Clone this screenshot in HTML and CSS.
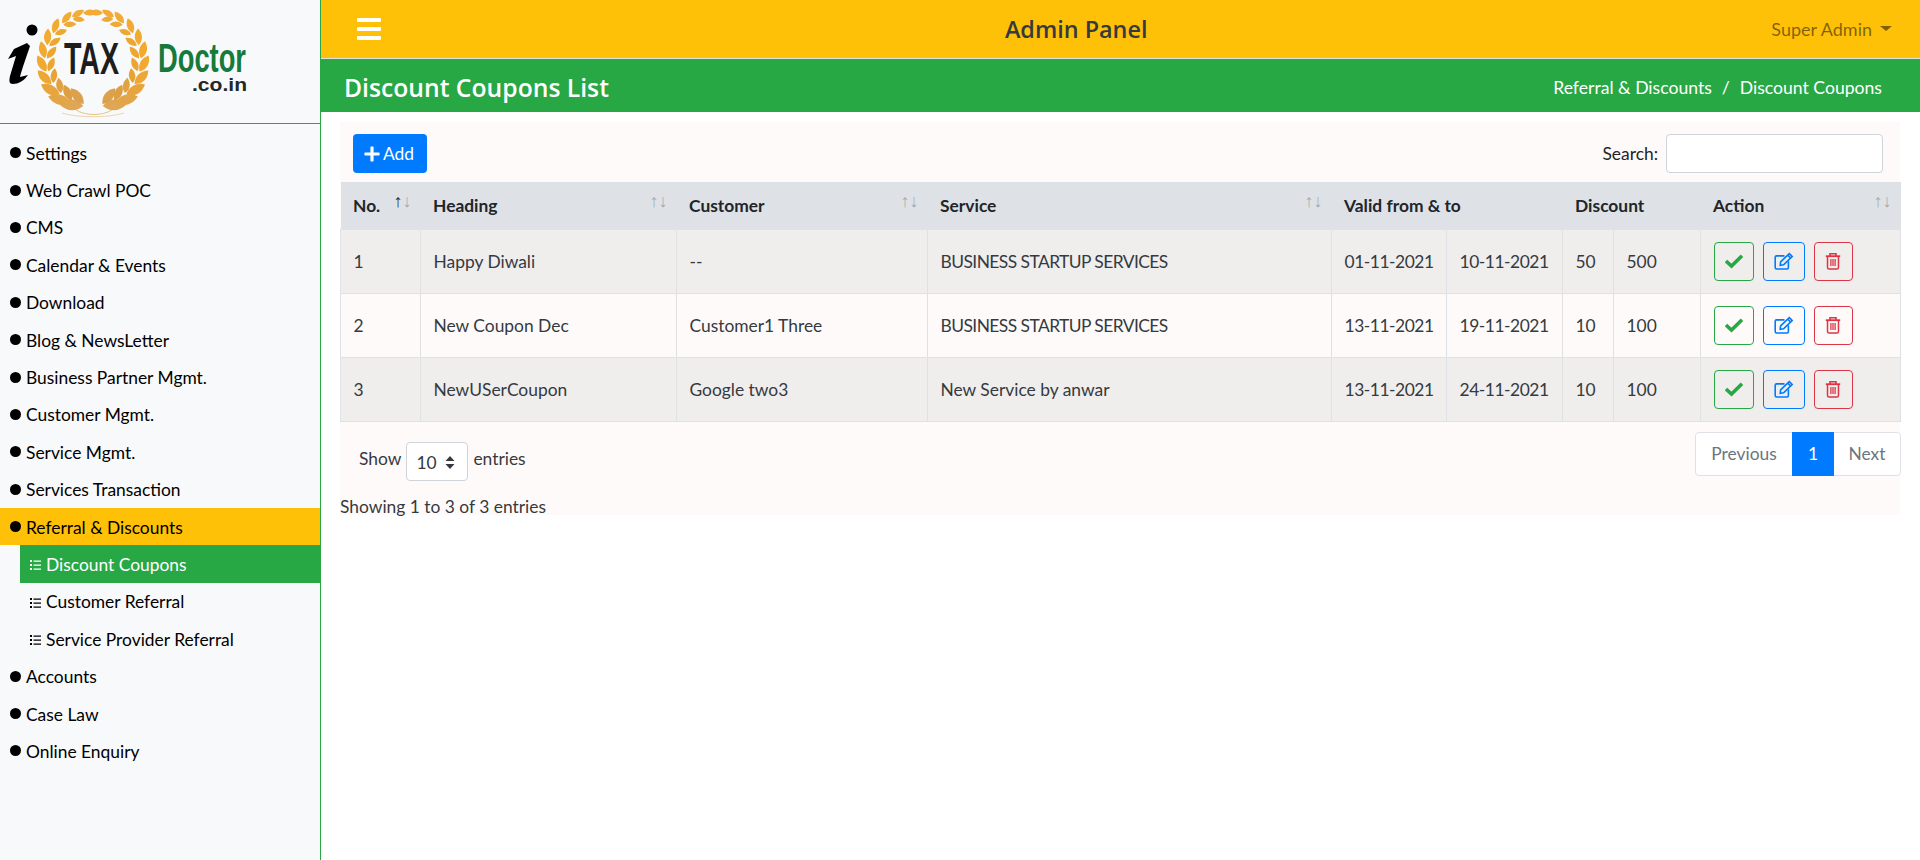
FILE: index.html
```html
<!DOCTYPE html>
<html lang="en">
<head>
<meta charset="utf-8">
<title>Discount Coupons List</title>
<link rel="stylesheet" href="styles.css">
</head>
<body>
<svg class="sprites" width="0" height="0" aria-hidden="true">
  <defs>
    <path id="leaf" d="M0 0C-4 -6 -11 -8 -18 -4C-13 3 -6 4 0 0Z"/>
    <g id="wreath-half">
      <use href="#leaf" fill="#dfa656" transform="translate(93 60) rotate(12) translate(0 47) rotate(-18) scale(1.35)"/>
      <use href="#leaf" fill="#dca14c" transform="translate(93 60) rotate(12) translate(0 45) rotate(26) scale(1.1)"/>
      <use href="#leaf" fill="#e2a548" transform="translate(93 60) rotate(28) translate(0 48) rotate(-26) scale(1.25)"/>
      <use href="#leaf" fill="#dd9f42" transform="translate(93 60) rotate(28) translate(0 46) rotate(24) scale(.95)"/>
      <use href="#leaf" fill="#e8a53c" transform="translate(93 60) rotate(44) translate(0 48) rotate(-28) scale(1.15)"/>
      <use href="#leaf" fill="#e2a23f" transform="translate(93 60) rotate(44) translate(0 46) rotate(24) scale(.85)"/>
      <use href="#leaf" fill="#eda735" transform="translate(93 60) rotate(60) translate(0 48) rotate(-28) scale(1.05)"/>
      <use href="#leaf" fill="#e7a435" transform="translate(93 60) rotate(60) translate(0 46) rotate(24) scale(.8)"/>
      <use href="#leaf" fill="#f1a92f" transform="translate(93 60) rotate(76) translate(0 48) rotate(-28)"/>
      <use href="#leaf" fill="#eba632" transform="translate(93 60) rotate(76) translate(0 46) rotate(24) scale(.8)"/>
      <use href="#leaf" fill="#f2a92e" transform="translate(93 60) rotate(92) translate(0 48) rotate(-28) scale(.95)"/>
      <use href="#leaf" fill="#eda731" transform="translate(93 60) rotate(92) translate(0 46) rotate(24) scale(.8)"/>
      <use href="#leaf" fill="#f2aa2f" transform="translate(93 60) rotate(108) translate(0 48) rotate(-28) scale(.9)"/>
      <use href="#leaf" fill="#eda731" transform="translate(93 60) rotate(108) translate(0 46) rotate(24) scale(.75)"/>
      <use href="#leaf" fill="#f2aa30" transform="translate(93 60) rotate(124) translate(0 48) rotate(-28) scale(.85)"/>
      <use href="#leaf" fill="#eda832" transform="translate(93 60) rotate(124) translate(0 46) rotate(24) scale(.7)"/>
      <use href="#leaf" fill="#f2ab33" transform="translate(93 60) rotate(140) translate(0 48) rotate(-24) scale(.8)"/>
      <use href="#leaf" fill="#eeaa36" transform="translate(93 60) rotate(140) translate(0 46) rotate(24) scale(.7)"/>
      <use href="#leaf" fill="#f2ab36" transform="translate(93 60) rotate(154) translate(0 48) rotate(-16) scale(.75)"/>
      <use href="#leaf" fill="#eeaa36" transform="translate(93 60) rotate(154) translate(0 46) rotate(20) scale(.65)"/>
      <use href="#leaf" fill="#f2ab36" transform="translate(93 60) rotate(168) translate(0 48) rotate(-4) scale(.75)"/>
    </g>
    <g id="ico-check"><path d="M1 9L6.5 14L17 3.8" fill="none" stroke="#28a745" stroke-width="3.5"/></g>
    <g id="ico-edit" fill="none" stroke="#007bff" stroke-width="1.6">
      <path d="M10.5 3.9H2.6A1.4 1.4 0 0 0 1.2 5.3V15.6A1.4 1.4 0 0 0 2.6 17H13A1.4 1.4 0 0 0 14.4 15.6V9.3"/>
      <path d="M6.6 9.8L15.3 1.6L18.2 4.4L9.6 12.8L6.2 13.3Z"/>
      <path d="M13.7 3.2L16.6 6"/>
    </g>
    <g id="ico-trash" fill="none" stroke="#dc3545" stroke-width="1.5">
      <path d="M.8 4.2H15.2" stroke-width="1.8"/>
      <path d="M5 4V1.8H11V4" stroke-width="1.6"/>
      <path d="M2.5 4.4V15.4A1.6 1.6 0 0 0 4.1 17H11.9A1.6 1.6 0 0 0 13.5 15.4V4.4"/>
      <path d="M5.9 7V14M8 7V14M10.1 7V14" stroke-width="1.3"/>
    </g>
    <g id="ico-list" fill="currentColor">
      <path d="M0 1h2v2H0zM0 5h2v2H0zM0 9h2v2H0zM3.5 1.4h7.5v1.3H3.5zM3.5 5.4h7.5v1.3H3.5zM3.5 9.4h7.5v1.3H3.5z"/>
    </g>
  </defs>
</svg>

<div class="app">
  <aside class="sidebar">
    <div class="brand">
      <svg class="logo" width="320" height="122" viewBox="0 0 320 122">
        <use href="#wreath-half"/>
        <use href="#wreath-half" transform="translate(186 0) scale(-1 1)"/>
        <path d="M76 110C86 116 102 116 112 110" fill="none" stroke="#e6c38d" stroke-width="1"/>
        <path d="M62 113C78 118 108 118 124 113" fill="none" stroke="#eed5ad" stroke-width="1"/>
        <circle cx="32" cy="30" r="5.5" fill="#000"/>
        <path class="i-mark" d="M14 49L27 43L30 46C26 58 22 69 20 77L28 75C24 81 18 84 13 84C9 84 9 81 10 76L16 56L8 59Z"/>
        <text class="logo-tax" x="64" y="74" textLength="55" lengthAdjust="spacingAndGlyphs">TAX</text>
        <text class="logo-doctor" x="158" y="72" textLength="88" lengthAdjust="spacingAndGlyphs">Doctor</text>
        <text class="logo-domain" x="192" y="91" textLength="55" lengthAdjust="spacingAndGlyphs">.co.in</text>
      </svg>
    </div>
    <nav class="menu">
      <a class="menu-item"><i class="dot"></i><span>Settings</span></a>
      <a class="menu-item"><i class="dot"></i><span>Web Crawl POC</span></a>
      <a class="menu-item"><i class="dot"></i><span>CMS</span></a>
      <a class="menu-item"><i class="dot"></i><span>Calendar &amp; Events</span></a>
      <a class="menu-item"><i class="dot"></i><span>Download</span></a>
      <a class="menu-item"><i class="dot"></i><span>Blog &amp; NewsLetter</span></a>
      <a class="menu-item"><i class="dot"></i><span>Business Partner Mgmt.</span></a>
      <a class="menu-item"><i class="dot"></i><span>Customer Mgmt.</span></a>
      <a class="menu-item"><i class="dot"></i><span>Service Mgmt.</span></a>
      <a class="menu-item"><i class="dot"></i><span>Services Transaction</span></a>
      <a class="menu-item open"><i class="dot"></i><span>Referral &amp; Discounts</span></a>
      <a class="sub-item current"><svg class="sub-ico" width="11" height="11" viewBox="0 0 11 11"><use href="#ico-list"/></svg><span>Discount Coupons</span></a>
      <a class="sub-item"><svg class="sub-ico" width="11" height="11" viewBox="0 0 11 11"><use href="#ico-list"/></svg><span>Customer Referral</span></a>
      <a class="sub-item"><svg class="sub-ico" width="11" height="11" viewBox="0 0 11 11"><use href="#ico-list"/></svg><span>Service Provider Referral</span></a>
      <a class="menu-item"><i class="dot"></i><span>Accounts</span></a>
      <a class="menu-item"><i class="dot"></i><span>Case Law</span></a>
      <a class="menu-item"><i class="dot"></i><span>Online Enquiry</span></a>
    </nav>
  </aside>

  <main class="main">
    <header class="topbar">
      <svg class="bars" width="24" height="22" viewBox="0 0 24 22"><path d="M1 0H23A1 1 0 0 1 24 1V3A1 1 0 0 1 23 4H1A1 1 0 0 1 0 3V1A1 1 0 0 1 1 0ZM1 9H23A1 1 0 0 1 24 10V12A1 1 0 0 1 23 13H1A1 1 0 0 1 0 12V10A1 1 0 0 1 1 9ZM1 18H23A1 1 0 0 1 24 19V21A1 1 0 0 1 23 22H1A1 1 0 0 1 0 21V19A1 1 0 0 1 1 18Z" fill="#fff"/></svg>
      <div class="panel-title">Admin Panel</div>
      <div class="user">Super Admin<i class="caret"></i></div>
    </header>
    <div class="pagehead">
      <h1>Discount Coupons List</h1>
      <div class="crumbs"><span>Referral &amp; Discounts</span><span class="sep">/</span><span>Discount Coupons</span></div>
    </div>

    <section class="card">
      <div class="toolbar">
        <button class="btn-add"><svg width="16" height="16" viewBox="0 0 16 16"><path d="M6.4 1.2A.8.8 0 0 1 7.2.4H8.8A.8.8 0 0 1 9.6 1.2V6.4H14.8A.8.8 0 0 1 15.6 7.2V8.8A.8.8 0 0 1 14.8 9.6H9.6V14.8A.8.8 0 0 1 8.8 15.6H7.2A.8.8 0 0 1 6.4 14.8V9.6H1.2A.8.8 0 0 1 .4 8.8V7.2A.8.8 0 0 1 1.2 6.4H6.4Z" fill="#fff"/></svg>Add</button>
        <label class="search">Search:<span class="search-box"></span></label>
      </div>
      <table class="grid">
        <colgroup>
          <col class="c-no"><col class="c-head"><col class="c-cust"><col class="c-serv"><col class="c-from"><col class="c-to"><col class="c-d1"><col class="c-d2"><col class="c-act">
        </colgroup>
        <thead>
          <tr>
            <th class="sort active">No.</th>
            <th class="sort">Heading</th>
            <th class="sort">Customer</th>
            <th class="sort">Service</th>
            <th colspan="2">Valid from &amp; to</th>
            <th colspan="2">Discount</th>
            <th class="sort">Action</th>
          </tr>
        </thead>
        <tbody>
          <tr class="odd">
            <td>1</td><td>Happy Diwali</td><td>--</td><td class="caps">BUSINESS STARTUP SERVICES</td><td class="date">01-11-2021</td><td class="date">10-11-2021</td><td>50</td><td>500</td>
            <td><div class="actions"><a class="act act-ok"><svg width="18" height="18" viewBox="0 0 18 18"><use href="#ico-check"/></svg></a><a class="act act-edit"><svg width="20" height="18" viewBox="0 0 20 18"><use href="#ico-edit"/></svg></a><a class="act act-del"><svg width="16" height="18" viewBox="0 0 16 18"><use href="#ico-trash"/></svg></a></div></td>
          </tr>
          <tr>
            <td>2</td><td>New Coupon Dec</td><td>Customer1 Three</td><td class="caps">BUSINESS STARTUP SERVICES</td><td class="date">13-11-2021</td><td class="date">19-11-2021</td><td>10</td><td>100</td>
            <td><div class="actions"><a class="act act-ok"><svg width="18" height="18" viewBox="0 0 18 18"><use href="#ico-check"/></svg></a><a class="act act-edit"><svg width="20" height="18" viewBox="0 0 20 18"><use href="#ico-edit"/></svg></a><a class="act act-del"><svg width="16" height="18" viewBox="0 0 16 18"><use href="#ico-trash"/></svg></a></div></td>
          </tr>
          <tr class="odd">
            <td>3</td><td>NewUSerCoupon</td><td>Google two3</td><td>New Service by anwar</td><td class="date">13-11-2021</td><td class="date">24-11-2021</td><td>10</td><td>100</td>
            <td><div class="actions"><a class="act act-ok"><svg width="18" height="18" viewBox="0 0 18 18"><use href="#ico-check"/></svg></a><a class="act act-edit"><svg width="20" height="18" viewBox="0 0 20 18"><use href="#ico-edit"/></svg></a><a class="act act-del"><svg width="16" height="18" viewBox="0 0 16 18"><use href="#ico-trash"/></svg></a></div></td>
          </tr>
        </tbody>
      </table>
      <div class="footer-row">
        <div class="length">Show<span class="select">10<svg width="10" height="13" viewBox="0 0 10 13"><path d="M5 0L9.5 5H.5ZM5 13L.5 8H9.5Z" fill="#343a40"/></svg></span>entries</div>
        <div class="pager"><a class="page p-prev">Previous</a><a class="page now">1</a><a class="page p-next">Next</a></div>
      </div>
      <div class="info">Showing 1 to 3 of 3 entries</div>
    </section>
  </main>
</div>
</body>
</html>
```

FILE: styles.css
```css
* { box-sizing: border-box; }
html, body { margin: 0; height: 100%; overflow: hidden; }
body {
  font-family: Lato, "Open Sans", "Liberation Sans", sans-serif;
  font-size: 17.4px;
  color: #212529;
  background: #fff;
}
.sprites { position: absolute; }
.app { display: flex; height: 860px; }

/* Sidebar */
.sidebar {
  width: 321px;
  flex: none;
  background: #f8f9fa;
  border-right: 1px solid #28a745;
}
.brand { height: 124px; border-bottom: 1px solid #28a745; }
.logo { display: block; }
.i-mark { fill: #000; }
.logo-tax { font: 700 44px "Liberation Sans", sans-serif; fill: #1d1d1b; }
.logo-doctor { font: 700 41.5px "Liberation Sans", sans-serif; fill: #157a3c; }
.logo-domain { font: 700 19px "Liberation Sans", sans-serif; fill: #262626; }
.menu { display: flex; flex-direction: column; padding-top: 10px; }
.menu-item, .sub-item {
  display: flex;
  align-items: center;
  height: 37.4px;
  color: #000;
  white-space: nowrap;
}
.menu-item span, .sub-item span { padding-top: 1px; }
.menu-item { padding-left: 10px; }
.dot {
  width: 11px;
  height: 11px;
  border-radius: 50%;
  background: #000;
  margin-right: 5px;
  flex: none;
}
.menu-item.open { background: #ffc107; }
.sub-item { margin-left: 20px; padding-left: 10px; }
.sub-item.current { background: #28a745; color: #fff; }
.sub-ico { margin: 2px 5px 0 0; flex: none; }

/* Main */
.main { flex: 1; min-width: 0; }
.topbar {
  display: flex;
  align-items: center;
  justify-content: space-between;
  height: 59px;
  padding: 0 28px 1px 36px;
  background: #ffc107;
  border-bottom: 1px solid #dee2e6;
}
.bars { display: block; }
.panel-title {
  font-family: "Open Sans", sans-serif;
  font-size: 23.4px;
  font-weight: 600;
  color: #343a40;
}
.user { display: flex; align-items: center; font-size: 18px; color: rgba(0, 0, 0, .5); }
.caret {
  margin-left: 8px;
  border-top: 5px solid rgba(0, 0, 0, .5);
  border-left: 6px solid transparent;
  border-right: 6px solid transparent;
}
.pagehead {
  display: flex;
  align-items: center;
  justify-content: space-between;
  height: 53px;
  padding: 4px 38px 0 23px;
  background: #28a745;
  color: #fff;
}
.pagehead h1 {
  margin: 0;
  font-family: "Open Sans", sans-serif;
  font-size: 24.7px;
  font-weight: 600;
}
.crumbs { display: flex; gap: 10px; font-size: 17.6px; }

/* Card */
.card {
  margin: 10px 0 0 19px;
  width: 1560px;
  height: 393px;
  background: #fffafa;
}
.toolbar {
  display: flex;
  align-items: center;
  justify-content: space-between;
  height: 60px;
  padding: 12px 17px 9px 13px;
}
.btn-add {
  display: flex;
  align-items: center;
  gap: 3px;
  width: 74px;
  height: 39px;
  padding: 0 0 0 11px;
  border: 0;
  border-radius: 4px;
  background: #007bff;
  color: #fff;
  font: inherit;
}
.search { display: flex; align-items: center; gap: 8px; }
.search-box {
  display: block;
  width: 217px;
  height: 39px;
  background: #fff;
  border: 1px solid #ced4da;
  border-radius: 4px;
}
.grid {
  width: 1560px;
  table-layout: fixed;
  border-collapse: collapse;
}
.c-no { width: 80px; }
.c-head { width: 256px; }
.c-cust { width: 251px; }
.c-serv { width: 404px; }
.c-from { width: 115px; }
.c-to { width: 116px; }
.c-d1 { width: 51px; }
.c-d2 { width: 87px; }
.c-act { width: 200px; }
.grid th {
  position: relative;
  height: 46px;
  padding: 0 12.5px 2px;
  background: #dee2e6;
  border-top: 2px solid #dee2e6;
  text-align: left;
  font-weight: 700;
  color: #212529;
}
.grid td {
  height: 64px;
  padding: 0 12.5px;
  border: 1px solid #dee2e6;
  color: #343a40;
  white-space: nowrap;
}
.grid td.date { letter-spacing: -.45px; }
.grid td.caps { letter-spacing: -.55px; }
.grid tr.odd td { background: #f0eded; }
.sort::before, .sort::after {
  position: absolute;
  top: 6px;
  font-family: "Open Sans", sans-serif;
  font-size: 18px;
  font-weight: 400;
  opacity: .3;
  line-height: 20px;
}
.sort::before { content: "\2191"; right: 18px; }
.sort::after { content: "\2193"; right: 9px; }
.sort.active::before { opacity: 1; }
.actions { display: flex; gap: 9px; }
.act {
  display: flex;
  align-items: center;
  justify-content: center;
  height: 39px;
  border: 1px solid;
  border-radius: 4px;
}
.act-ok { width: 40px; border-color: #28a745; }
.act-edit { width: 42px; border-color: #007bff; }
.act-del { width: 39px; border-color: #dc3545; }
.footer-row {
  display: flex;
  justify-content: space-between;
  height: 64px;
  padding: 10px 0 0 19px;
}
.length { display: flex; align-items: flex-start; line-height: 34px; padding-top: 10px; color: #343a40; }
.select {
  display: flex;
  align-items: center;
  gap: 8px;
  width: 62px;
  height: 39px;
  margin: 0 5px 0 5px;
  padding: 3px 0 0 9px;
  background: #fff;
  border: 1px solid #ced4da;
  border-radius: 4px;
  line-height: 1;
}
.pager {
  display: flex;
  height: 44px;
  width: 206px;
  margin-right: -1px;
  background: #fff;
  border: 1px solid #dee2e6;
  border-radius: 4px;
}
.page {
  display: flex;
  align-items: center;
  justify-content: center;
  color: #6c757d;
}
.p-prev { width: 96px; }
.p-next { flex: 1; }
.page.now { width: 42px; margin: -1px 0; background: #007bff; color: #fff; }
.info { color: #343a40; margin-top: 9px; line-height: 24px; }
```
